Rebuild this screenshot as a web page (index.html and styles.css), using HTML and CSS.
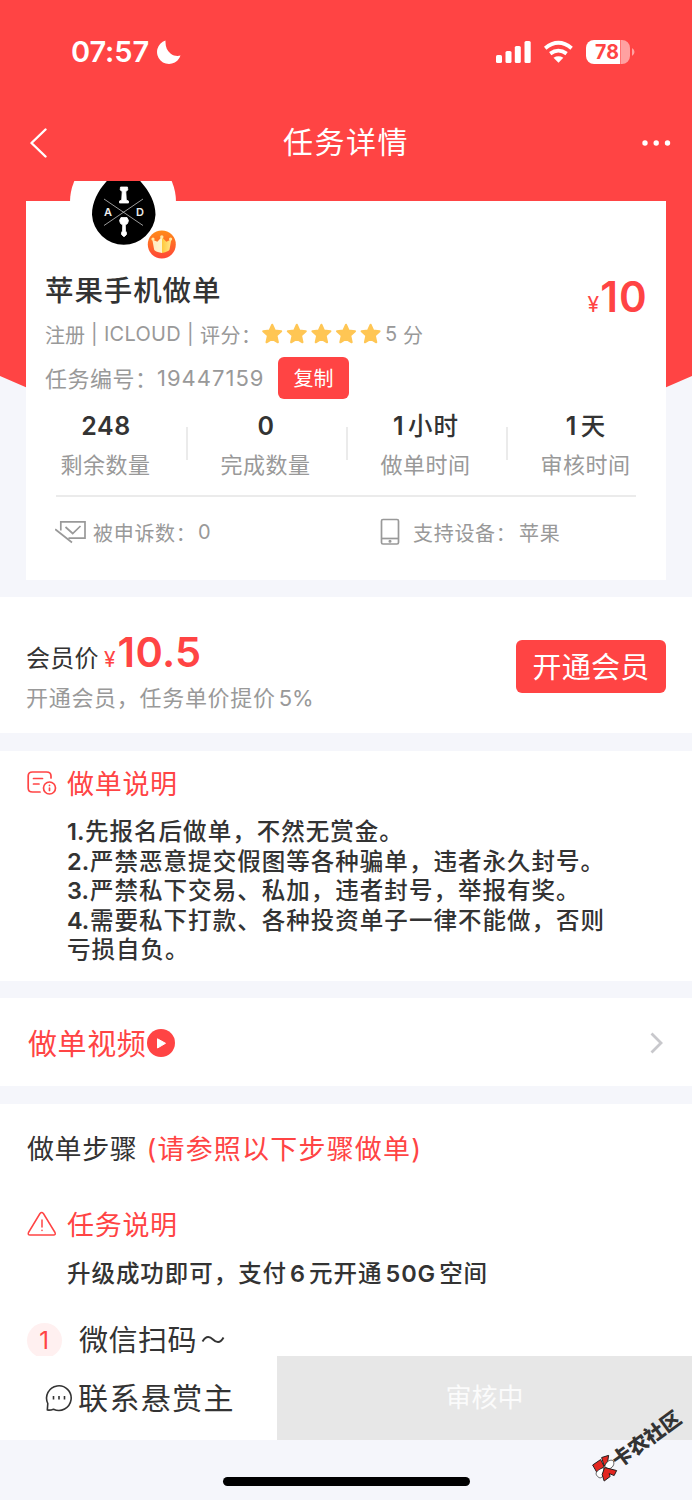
FILE: index.html
```html
<!DOCTYPE html>
<html lang="zh-CN">
<head>
<meta charset="utf-8">
<title>任务详情</title>
<link rel="stylesheet" href="styles.css">
</head>
<body>
<header class="top">
  <div class="status">
    <span class="clock">07:57</span>
    <svg class="moon" width="24" height="24" viewBox="0 0 24 24"><path d="M8.500 .5A12 12 0 1 0 23.500 15.500C21 16.300 17 16.300 13.500 13.500S8.200 6.500 8.500 .5Z" fill="#fff"/></svg>
    <svg class="signals" width="142" height="26" viewBox="0 0 142 26">
      <g fill="#fff">
        <rect x="0" y="16" width="6" height="8" rx="1.600"/><rect x="9.500" y="12" width="6" height="12" rx="1.600"/><rect x="18.800" y="7" width="6" height="17" rx="1.600"/><rect x="28.500" y="2" width="6.200" height="22" rx="1.600"/>
        <path d="M57.500 18.700Q62.500 15.800 67.300 18.700L62.500 23.800Z"/>
      </g>
      <g fill="none" stroke="#fff" stroke-width="3.800"><path d="M49.200 9.200Q62.400-1.700 75.600 9.200"/><path d="M54.200 14.600Q62.400 8.600 70.600 14.600"/></g>
      <path d="M98 1h26v24H98a8 8 0 0 1-8-8V9a8 8 0 0 1 8-8Z" fill="#fff"/>
      <path d="M124.500 1h1.500a8 8 0 0 1 8 8v8a8 8 0 0 1-8 8h-1.500ZM136 9q2.500 1.500 2.500 4t-2.500 4Z" fill="#ffa1a1"/>
      <text x="111" y="20.300" text-anchor="middle" class="battery">78</text>
    </svg>
  </div>
  <nav class="nav">
    <svg width="17" height="30" viewBox="0 0 17 30"><path d="M15.500 1.500L1.500 15L15.500 28.500" fill="none" stroke="#fff" stroke-width="2.400" stroke-linecap="round" stroke-linejoin="round"/></svg>
    <h1>任务详情</h1>
    <svg width="30" height="6" viewBox="0 0 30 6" fill="#fff"><circle cx="3" cy="3" r="2.700"/><circle cx="14.200" cy="3" r="2.700"/><circle cx="25.500" cy="3" r="2.700"/></svg>
  </nav>
</header>

<section class="hero">
  <article class="card">
    <svg class="avatar" width="108" height="112" viewBox="0 0 108 112">
      <defs>
        <linearGradient id="badge" x2="0" y2="1"><stop stop-color="#ff8b18"/><stop offset="1" stop-color="#ff4638"/></linearGradient>
        <linearGradient id="crown"><stop stop-color="#ffe9c0"/><stop offset=".49" stop-color="#fff4cf"/><stop offset=".5" stop-color="#ffc839"/><stop offset="1" stop-color="#ffe68b"/></linearGradient>
      </defs>
      <circle cx="54" cy="53" r="53" fill="#fff"/>
      <path d="M37 33C29 42 23 53 23 65.700A31.800 31.800 0 0 0 86.500 65.700C86.500 53 80 42 72 33Q55 10 37 33Z" fill="#000"/>
      <path d="M35 50L74 76.500M74 50L35 76.500" stroke="#ddd" stroke-width=".7"/>
      <path d="M51.500 38h7l.3 3-2 1.500.5 8.500 2.200 1v2h-9v-2l2.200-1 .5-8.500-2-1.500ZM52 68.500h6l1.500 3-1 3-2.200 1.500.2 6 1 1.500v2l-2 2h-1l-2-2v-2l1-1.500.2-6-2.200-1.500-1-3Z" fill="#fff" stroke="#fff" stroke-width=".8"/>
      <g class="initials"><text x="35" y="66.500">A</text><text x="67" y="66.500">D</text></g>
      <circle cx="92.800" cy="95.500" r="14" fill="url(#badge)"/>
      <path d="M83.300 90.500l5 2.200 4.500-4.700 4.500 4.700 5-2.200-1.800 10q-.3 1.800-7.500 3.500-7.500-1.500-7.900-3.500Z" fill="url(#crown)"/>
      <g fill="#ffe9a5"><circle cx="84" cy="90" r="1.600"/><circle cx="92.800" cy="88" r="1.700"/><circle cx="101.600" cy="90" r="1.600"/></g>
    </svg>
    <div class="summary">
      <div class="facts">
        <h2>苹果手机做单</h2>
        <p class="meta">
          <span class="kind">注册</span><span class="platform">| ICLOUD |</span><span class="score-label">评分：</span>
          <svg width="124" height="24" viewBox="0 0 124 24" fill="#ffc654" stroke="#ffc654" stroke-width="2" stroke-linejoin="round">
            <path id="star" d="M11.200 2.700L13.900 8.600L20.200 9.300L15.500 13.600L16.900 20.300L11.200 17L5.500 20.300L6.900 13.600L2.200 9.300L8.500 8.600Z"/>
            <use href="#star" x="24.600"/><use href="#star" x="49.200"/><use href="#star" x="73.800"/><use href="#star" x="98.400"/>
          </svg>
          <span class="score">5</span><span>分</span>
        </p>
        <p class="order"><span class="order-label">任务编号：</span><span class="order-no">19447159</span><button class="copy">复制</button></p>
      </div>
      <p class="price"><span class="yen">¥</span>10</p>
    </div>
    <ul class="stats">
      <li><strong>248</strong><span>剩余数量</span></li>
      <li><strong>0</strong><span>完成数量</span></li>
      <li><strong>1<b>小时</b></strong><span>做单时间</span></li>
      <li><strong>1<b>天</b></strong><span>审核时间</span></li>
    </ul>
    <div class="extras">
      <p><svg width="32" height="24" viewBox="0 0 32 24" fill="none" stroke="#999" stroke-width="1.700"><path d="M5.800 10.500V1.800H30V18.200H13.500M.2 9.200L17 22.500M10.500 7L17.700 13.500L25.500 6"/></svg><span class="appeals">被申诉数：</span><span class="appeal-count">0</span></p>
      <p><svg width="20" height="28" viewBox="0 0 20 28" fill="none" stroke="#999" stroke-width="1.700"><rect x="1.500" y="1.500" width="17" height="24.500" rx="1.500"/><path d="M2 20.500H18"/><circle cx="10" cy="23.300" r=".7"/></svg><span class="devices">支持设备：</span><span>苹果</span></p>
    </div>
  </article>
</section>

<section class="member">
  <div>
    <p class="member-price"><span class="member-label">会员价</span><span class="yen">¥</span><strong>10.5</strong></p>
    <p class="member-note">开通会员，任务单价提价<span>5%</span></p>
  </div>
  <button>开通会员</button>
</section>

<section class="notes">
  <h3><svg width="30" height="26" viewBox="0 0 30 26" fill="none" stroke="#ff4444" stroke-width="1.700" stroke-linecap="round"><path d="M13 22H5.500Q1.200 22 1.200 18V6Q1.200 2 5.500 2H19.500Q24 2 24 6V8M6.500 8.500H15.500M6.500 14H12"/><circle cx="22.500" cy="18" r="6"/><path d="M22.500 18.200V20.500M22.500 15.300V15.400"/></svg><span>做单说明</span></h3>
  <ol>
    <li><span>1.</span>先报名后做单，不然无赏金。</li>
    <li><span>2.</span>严禁恶意提交假图等各种骗单，违者永久封号。</li>
    <li><span>3.</span>严禁私下交易、私加，违者封号，举报有奖。</li>
    <li><span>4.</span>需要私下打款、各种投资单子一律不能做，否则<br>亏损自负。</li>
  </ol>
</section>

<section class="video">
  <span>做单视频</span>
  <svg width="28" height="28" viewBox="0 0 28 28"><circle cx="14" cy="14" r="14" fill="#ff4444"/><path d="M10.500 9.800L18.500 14.300L10.500 19Z" fill="#fff" stroke="#fff" stroke-linejoin="round"/></svg>
  <svg class="chevron" width="14" height="22" viewBox="0 0 14 22"><path d="M1.500 1.500L11 11L1.500 20.500" fill="none" stroke="#c8c8cc" stroke-width="2.800"/></svg>
</section>

<section class="steps">
  <h2>做单步骤<span class="hint"><i>(</i>请参照以下步骤做单<i>)</i></span></h2>
  <h3><svg width="30" height="26" viewBox="0 0 30 26" fill="none" stroke="#ff4444" stroke-width="1.500" stroke-linecap="round" stroke-linejoin="round"><path d="M13 2.500Q14.700 .5 16.400 2.500L28 21.500Q29 24 26.500 24H3Q.5 24 1.500 21.500Z"/><path d="M15 9V16M15 19.200V19.500"/></svg><span>任务说明</span></h3>
  <p class="task">升级成功即可，支付<span class="six">6</span>元开通<span class="gigs">50G</span>空间</p>
  <p class="step"><span class="step-no">1</span><span class="step-name">微信扫码</span><svg width="24" height="10" viewBox="0 0 24 10"><path d="M1.500 6.500C5.500 0 9 1.500 12 4.500S19 9 22.500 2.500" fill="none" stroke="#333" stroke-width="1.900"/></svg></p>
</section>

<footer>
  <div class="actions">
    <div class="contact"><svg width="28" height="28" viewBox="0 0 28 28" fill="none" stroke="#333" stroke-width="1.600"><path d="M2.300 26L2.800 19.500A12.300 12.300 0 1 1 8.500 25.200Q5.500 26.400 2.300 26Z" stroke-linejoin="round"/><path d="M8.500 12V15.500M14 12V15.500M19.500 12V15.500"/></svg><span>联系悬赏主</span></div>
    <div class="pending">审核中</div>
  </div>
  <div class="home"><i></i></div>
</footer>
<div class="watermark">
  <svg width="28" height="28" viewBox="0 0 28 28" stroke="#222" stroke-width="1"><path d="M2 10.500L10 5L13.500 12L6 17.500Z" fill="#e32620"/><path d="M11 3L18 .8L17 7L13.500 11.500Z" fill="#e32620"/><path d="M14 12C16 6 20 5 22 6S24 13 18 14.500Z" fill="#fff" stroke-width=".7"/><path d="M13 13C5 16 4 19 7 22S14 23 13 13Z" fill="#fff" stroke-width=".7"/><path d="M14 13L26 16L23.500 21L18.500 19L19.500 22L13.500 26.500L11.500 20Z" fill="#e32620"/></svg>
  <span>卡农社区</span>
</div>
</body>
</html>
```
FILE: styles.css
```css
* { box-sizing: border-box; margin: 0; padding: 0; font-weight: inherit; font-style: normal; }
body { width: 692px; height: 1500px; overflow: hidden; position: relative; background: #f5f6fb; color: #333; font-family: Inter, "Noto Sans CJK SC", sans-serif; font-weight: 400; white-space: nowrap; }
svg { display: block; flex: none; }
ul, ol { list-style: none; }
button { border: 0; background: #ff4444; color: #fff; font-family: inherit; }

.top { height: 181px; background: #ff4444; color: #fff; }
.status { height: 104px; display: flex; align-items: center; padding-left: 71px; }
.clock { width: 86px; height: 37px; line-height: 36px; font-size: 29px; font-weight: 600; letter-spacing: -.1px; }
.signals { margin-left: 315px; }
.battery { font: 700 19.5px Inter; fill: #ff4444; }
.nav { height: 77px; display: flex; align-items: center; justify-content: space-between; padding: 0 20px 0 30px; }
.nav h1 { font-size: 30px; letter-spacing: 1.5px; line-height: 77px; padding-left: 3px; }

.hero { height: 416px; padding: 20px 26px 0; position: relative; overflow: hidden; }
.hero::before { content: ""; position: absolute; inset: 0 0 auto; height: 345px; background: #ff4444; clip-path: polygon(0 0, 100% 0, 100% 195px, 50% 100%, 0 195px); }
.card { position: relative; height: 379px; background: #fff; padding-top: 65px; }
.avatar { position: absolute; left: 43px; top: -52px; }
.initials { font: 600 11px Inter; fill: #eee; }
.summary { display: flex; justify-content: space-between; padding: 0 19px; }
.facts h2 { font-size: 28.5px; font-weight: 500; line-height: 50px; height: 48px; letter-spacing: .9px; }
.meta { display: flex; align-items: center; height: 40px; font-size: 20px; color: #999; }
.kind { width: 46px; }
.platform { width: 109px; letter-spacing: .3px; }
.score-label { width: 61px; letter-spacing: .5px; }
.score { width: 18px; }
.order { display: flex; align-items: center; height: 48px; font-size: 22px; color: #999; }
.order-label { width: 112px; letter-spacing: .5px; margin-top: -2px; }
.order-no { width: 121px; letter-spacing: 1px; }
.copy { width: 71px; height: 42px; padding-bottom: 2px; border-radius: 6px; font-size: 20px; }
.price { display: flex; align-items: baseline; height: 60px; font-size: 42px; font-weight: 600; line-height: 62px; letter-spacing: 1.2px; margin-right: -1px; color: #ff4444; }
.yen { font-size: 21px; font-weight: 400; letter-spacing: 0; color: #ff4444; margin-right: 1px; }
.stats { display: grid; grid-template-columns: repeat(4, 160px); height: 93px; }
.stats li { position: relative; display: flex; flex-direction: column; align-items: center; }
.stats li + li::before { content: ""; position: absolute; left: 0; top: 25px; width: 2px; height: 33px; background: #ebebeb; }
.stats strong { height: 47px; line-height: 48px; font-size: 25px; font-weight: 600; letter-spacing: .5px; }
.stats b { font-size: 24.5px; font-weight: 500; margin-left: 4px; letter-spacing: 1px; }
.stats span { font-size: 22px; line-height: 32px; letter-spacing: .5px; color: #999; margin-left: -1px; }
.extras { display: grid; grid-template-columns: 324px 1fr; margin: 0 30px; height: 75px; border-top: 2px solid #ebebeb; font-size: 20px; letter-spacing: .7px; color: #999; }
.extras p { display: flex; align-items: center; height: 70px; }
.extras p:first-child svg { margin-left: -1px; }
.appeals { width: 105px; margin-left: 6px; }
.devices { width: 106px; margin-left: 13px; }

.member { height: 136px; display: flex; justify-content: space-between; background: #fff; padding: 28px 26px 0; }
.member-price { display: flex; align-items: baseline; height: 56px; line-height: 54px; }
.member-label { width: 78px; font-size: 24px; letter-spacing: .3px; }
.member-price strong { font-size: 41.5px; font-weight: 600; letter-spacing: .3px; color: #ff4444; margin-left: 1px; }
.member-note { font-size: 22px; line-height: 34px; letter-spacing: .7px; color: #999; }
.member-note span { margin-left: 3px; letter-spacing: 0; }
.member button { width: 150px; height: 53px; margin-top: 15px; padding-bottom: 3px; border-radius: 6px; font-size: 29px; letter-spacing: .3px; }

.notes { height: 230px; margin-top: 18px; padding: 12px 0 0 27px; background: #fff; }
h3 { display: flex; align-items: center; gap: 10px; height: 40px; font-size: 27px; letter-spacing: .7px; color: #ff4444; }
h3 span { margin-top: -2px; }
.notes ol { margin: 14px 0 0 40px; font-size: 23.5px; font-weight: 500; letter-spacing: 1.03px; line-height: 29.5px; }
.notes li span { display: inline-block; width: 23px; font-weight: 600; letter-spacing: 0; }
.notes li:first-child span { width: 18px; }

.video { display: flex; align-items: center; height: 88px; margin-top: 17px; padding: 2px 28px 0; background: #fff; color: #ff4444; font-size: 29px; letter-spacing: .6px; }
.video span { margin-top: -2px; width: 119px; }
.chevron { margin-left: auto; }

.steps { height: 252px; margin-top: 18px; padding: 26px 0 0 27px; background: #fff; overflow: hidden; }
.steps h2 { height: 40px; line-height: 40px; font-size: 27px; letter-spacing: .6px; }
.hint { color: #ff4444; letter-spacing: 1.2px; margin-left: 9px; }
.steps h3 { margin-top: 34px; }
.task { margin-left: 40px; height: 58px; line-height: 60px; font-size: 23.5px; font-weight: 500; letter-spacing: .95px; }
.six, .gigs { margin: 0 3px; font-weight: 600; }
.step { display: flex; align-items: center; height: 76px; font-size: 29px; line-height: 30px; letter-spacing: .5px; }
.step svg { margin-left: 4px; }
.step-name { margin-top: 2px; }
.step-no { width: 35px; height: 35px; border-radius: 50%; margin-right: 17px; background: #fff0f0; color: #ff4444; font-size: 24px; line-height: 35px; text-align: center; }

.actions { display: grid; grid-template-columns: 277px 1fr; height: 84px; background: #fff; }
.contact { display: flex; align-items: center; gap: 5px; padding-left: 45px; font-size: 30px; letter-spacing: 1.4px; }
.contact span { margin-top: -4px; }
.pending { background: #e7e7e7; color: #fbfbfb; text-align: center; font-size: 26px; line-height: 84px; }
.home { height: 60px; padding-top: 37px; }
.home i { display: block; width: 247px; height: 9px; margin: 0 auto; border-radius: 5px; background: #000; }
.watermark { position: absolute; left: 583px; top: 1431px; display: flex; align-items: center; transform: rotate(-36deg); font-size: 20px; font-weight: 900; }
.watermark span { margin-left: -3px; }
.watermark svg { transform: rotate(36deg); }
```
